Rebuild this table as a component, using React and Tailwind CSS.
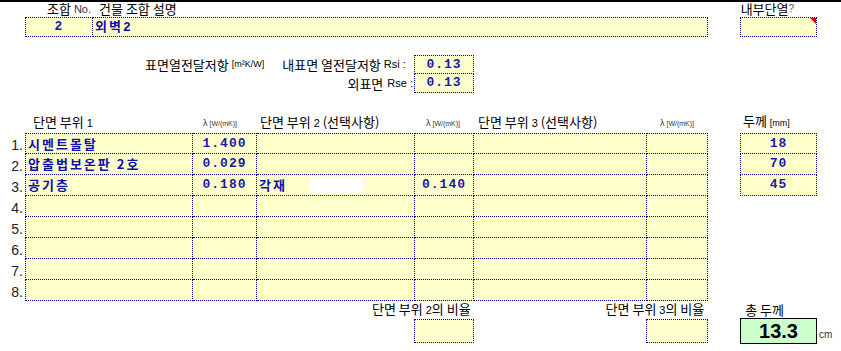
import React from 'react'

const kr = { fontFamily: '"Noto Sans CJK KR", "Liberation Sans", sans-serif' }
const ar = { fontFamily: '"Liberation Sans", Arial, sans-serif' }
const mono = { fontFamily: '"Liberation Mono", "DejaVu Sans Mono", monospace' }

const cell = 'bg-[#ffffcc] border-dotted border-[#000080]'

const rows = [
  { a: '시멘트몰탈', l1: '1.400', c: '', l2: '', t: '18' },
  { a: '압출법보온판 2호', l1: '0.029', c: '', l2: '', t: '70' },
  { a: '공기층', l1: '0.180', c: '각재', l2: '0.140', t: '45' },
  {}, {}, {}, {}, {},
]

function Lambda({ className = '' }) {
  return (
    <span className={'text-[9px] text-[#333] ' + className} style={ar}>
      λ<span className="text-[7px]"> [W/(mK)]</span>
    </span>
  )
}

function Blue({ children, className = '' }) {
  return (
    <span className={'text-[#1010b0] font-bold text-[13px] tracking-[2px] ' + className} style={kr}>
      {children}
    </span>
  )
}

function Num({ children }) {
  return (
    <span className="text-[#1a1aa8] font-bold text-[13px] tracking-[1px]" style={mono}>
      {children}
    </span>
  )
}

export default function App() {
  return (
    <div className="w-[841px] h-[351px] bg-white border-t-2 border-black overflow-hidden text-black" style={kr}>
      {/* 조합 header */}
      <div className="flex h-[15px] items-start text-[13px] leading-[14px]">
        <span className="ml-[47px]">조합</span>
        <span className="ml-[3px] text-[11px] text-[#333]" style={ar}>No.</span>
        <span className="ml-[8px]">건물 조합 설명</span>
        <span className="ml-[564px] text-[13px]">내부단열</span>
        <span className="text-[10px] text-[#555]" style={ar}>?</span>
      </div>
      <div className="flex h-[20px]">
        <div className={cell + ' ml-[25px] w-[68px] border flex items-center justify-center'}>
          <Num>2</Num>
        </div>
        <div className={cell + ' w-[615px] border border-l-0 flex items-center pl-[2px]'}>
          <Blue className="tracking-[1px]">외벽<span style={mono}>2</span></Blue>
        </div>
        <div className={cell + ' ml-[32px] w-[77px] border relative'}>
          <div className="absolute right-0 top-0 w-0 h-0 border-l-[6px] border-l-transparent border-t-[6px] border-t-[#e00000]" />
        </div>
      </div>

      {/* 표면열전달저항 */}
      <div className="flex mt-[18px]">
        <div className="w-[414px] flex flex-col text-[13px] leading-[19px]">
          <div className="flex h-[19px] items-center">
            <span className="ml-[145px]">표면열전달저항</span>
            <span className="ml-[3px] text-[9px]" style={ar}>[m²K/W]</span>
            <span className="ml-[18px]">내표면 열전달저항</span>
            <span className="ml-[3px] text-[11px]" style={ar}>Rsi :</span>
          </div>
          <div className="flex h-[19px] items-center justify-end pr-[1px]">
            <span>외표면</span>
            <span className="ml-[4px] text-[11px]" style={ar}>Rse :</span>
          </div>
        </div>
        <div className="flex flex-col w-[60px]">
          <div className={cell + ' h-[19px] border flex items-center justify-center'}><Num>0.13</Num></div>
          <div className={cell + ' h-[19px] border border-t-0 flex items-center justify-center'}><Num>0.13</Num></div>
        </div>
      </div>

      {/* table header */}
      <div className="flex mt-[23px] h-[15px] items-end text-[13px] leading-[15px]">
        <span className="ml-[33px] w-[170px]">단면 부위 <span className="text-[11px]" style={ar}>1</span></span>
        <Lambda className="w-[57px]" />
        <span className="w-[166px]">단면 부위 <span className="text-[11px]" style={ar}>2</span> (선택사항)</span>
        <Lambda className="w-[52px]" />
        <span className="w-[182px]">단면 부위 <span className="text-[11px]" style={ar}>3</span> (선택사항)</span>
        <Lambda className="w-[83px]" />
        <span>두께 <span className="text-[9px]" style={ar}>[mm]</span></span>
      </div>

      {/* table rows */}
      <div className="mt-[2px]">
        {rows.map((r, i) => (
          <div key={i} className="flex h-[21px]">
            <div className="w-[25px] flex items-end justify-end pr-[2px] text-[14px] leading-[17px] text-[#222]" style={ar}>
              {i + 1}.
            </div>
            <div className={cell + ' w-[168px] border-l border-r border-b flex items-center pl-[2px] ' + (i === 0 ? 'border-t' : '')}>
              {r.a && <Blue>{r.a}</Blue>}
            </div>
            <div className={cell + ' w-[64px] border-r border-b flex items-center justify-center ' + (i === 0 ? 'border-t' : '')}>
              {r.l1 && <Num>{r.l1}</Num>}
            </div>
            <div className={cell + ' w-[158px] border-r border-b flex items-center pl-[2px] ' + (i === 0 ? 'border-t' : '')}>
              {r.c && (
                <>
                  <Blue className="w-[50px]">{r.c}</Blue>
                  <div className="w-[54px] h-[17px] bg-white" />
                </>
              )}
            </div>
            <div className={cell + ' w-[59px] border-r border-b flex items-center justify-center ' + (i === 0 ? 'border-t' : '')}>
              {r.l2 && <Num>{r.l2}</Num>}
            </div>
            <div className={cell + ' w-[173px] border-r border-b ' + (i === 0 ? 'border-t' : '')} />
            <div className={cell + ' w-[61px] border-r border-b ' + (i === 0 ? 'border-t' : '')} />
            <div className="w-[32px]" />
            {i < 3 && (
              <div className={cell + ' w-[77px] border-l border-r border-b flex items-center justify-center ' + (i === 0 ? 'border-t' : '')}>
                <Num>{r.t}</Num>
              </div>
            )}
          </div>
        ))}
      </div>

      {/* bottom ratios */}
      <div className="flex h-[16px] items-end text-[13px] leading-[14px]">
        <span className="ml-[372px]">단면 부위 <span className="text-[11px]" style={ar}>2</span>의 비율</span>
        <span className="ml-[135px]">단면 부위 <span className="text-[11px]" style={ar}>3</span>의 비율</span>
        <span className="ml-[41px]">총 두께</span>
      </div>
      <div className="flex mt-[2px] items-start">
        <div className={cell + ' ml-[414px] w-[60px] h-[24px] border'} />
        <div className={cell + ' ml-[172px] w-[62px] h-[24px] border'} />
        <div className="ml-[32px] w-[77px] h-[26px] -mt-[1px] bg-[#ccffcc] border border-black flex items-center justify-center">
          <span className="text-[20px] font-bold leading-none" style={ar}>13.3</span>
        </div>
        <span className="ml-[2px] mt-[8px] text-[10px] text-[#333]" style={ar}>cm</span>
      </div>
    </div>
  )
}
